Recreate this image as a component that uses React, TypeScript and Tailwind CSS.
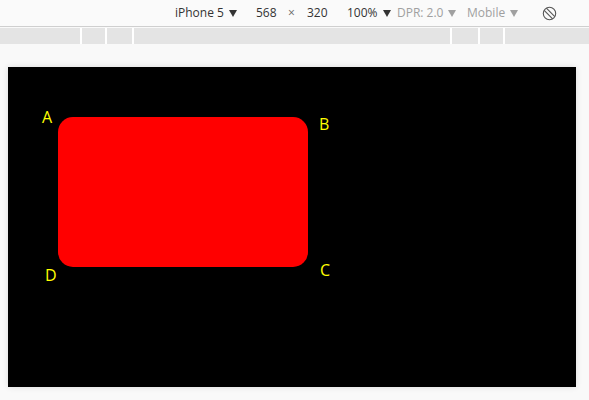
function Caret({ light }: { light?: boolean }) {
  return (
    <svg width="8" height="7" viewBox="0 0 8 7" className="ml-[5px] inline-block">
      <polygon points="0,0 8,0 4,7" fill={light ? '#a0a0a0' : '#333333'} />
    </svg>
  )
}

function RotateIcon() {
  return (
    <svg width="15" height="15" viewBox="0 0 15 15" fill="none" stroke="#555" strokeWidth="1.1">
      <circle cx="7.5" cy="7.5" r="6.2" />
      <line x1="4.4" y1="2.2" x2="12.8" y2="10.6" />
      <line x1="2.2" y1="4.4" x2="10.6" y2="12.8" />
    </svg>
  )
}

export default function App() {
  return (
    <div className="w-[589px] h-[400px] bg-[#f9f9f9] flex flex-col overflow-hidden font-['Open_Sans',sans-serif]">
      {/* device toolbar */}
      <div className="h-[27px] shrink-0 bg-[#fafafa] border-b border-[#cfcfcf] flex items-center pl-[175px] text-[12px] text-[#333]">
        <span className="w-[81px] flex items-center">iPhone 5<Caret /></span>
        <span className="w-[32px]">568</span>
        <span className="w-[19px] text-[#666]">×</span>
        <span className="w-[40px]">320</span>
        <span className="w-[50px] flex items-center">100%<Caret /></span>
        <span className="w-[70px] flex items-center text-[#a0a0a0]">DPR: 2.0<Caret light /></span>
        <span className="w-[75px] flex items-center text-[#a0a0a0]">Mobile<Caret light /></span>
        <RotateIcon />
      </div>

      {/* ruler */}
      <div className="mt-[1px] h-[16px] shrink-0 flex gap-[2px] bg-white">
        <div className="w-[80px] bg-[#e4e4e4]" />
        <div className="w-[23px] bg-[#e4e4e4]" />
        <div className="w-[25px] bg-[#e4e4e4]" />
        <div className="w-[316px] bg-[#e4e4e4]" />
        <div className="w-[26px] bg-[#e4e4e4]" />
        <div className="w-[23px] bg-[#e4e4e4]" />
        <div className="flex-1 bg-[#e4e4e4]" />
      </div>

      {/* viewport */}
      <div className="pl-[8px] pt-[23px]">
        <div className="relative w-[568px] h-[320px] bg-black pl-[50px] pt-[50px] shadow-[0_0_6px_rgba(0,0,0,0.12)]">
          <div className="w-[250px] h-[150px] bg-[#ff0000] rounded-[15px]" />
          <span className="absolute left-[34px] top-[42px] text-[16px] leading-none text-[#ffff00]">A</span>
          <span className="absolute left-[311px] top-[49px] text-[16px] leading-none text-[#ffff00]">B</span>
          <span className="absolute left-[312px] top-[195px] text-[16px] leading-none text-[#ffff00]">C</span>
          <span className="absolute left-[37px] top-[200px] text-[16px] leading-none text-[#ffff00]">D</span>
        </div>
      </div>
    </div>
  )
}
